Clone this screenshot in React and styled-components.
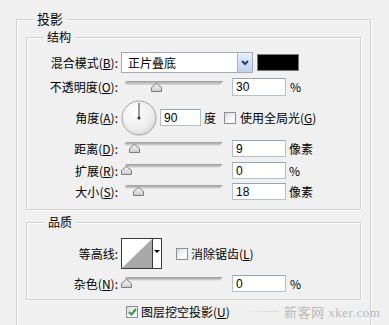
import React from 'react';
import styled, { createGlobalStyle } from 'styled-components';

const GlobalStyle = createGlobalStyle`
  html, body {
    margin: 0;
    padding: 0;
    background: #f0f0f0;
    overflow: hidden;
  }
  body {
    font-family: "Noto Sans CJK SC", "Liberation Sans", sans-serif;
    font-size: 12px;
    color: #000;
  }
`;

//Styles
const Page = styled.div`
  position: relative;
  width: 389px;
  height: 325px;
  box-sizing: border-box;
  padding: 11px 0 0 16px;
  overflow: hidden;
`;

const Group = styled.fieldset`
  box-sizing: border-box;
  width: ${p => p.$w}px;
  margin: ${p => p.$mt || 0}px 0 0 0;
  padding: ${p => p.$pt || 0}px ${p => p.$px || 0}px ${p => p.$pb || 0}px;
  border: 1px solid #d0d0d0;
  box-shadow: 1px 1px 0 #fff, inset 1px 1px 0 #fff;
  min-width: 0;
`;

const Legend = styled.legend`
  margin-left: ${p => p.$ml}px;
  padding: 0 4px;
  font-size: ${p => p.$size || 12}px;
  line-height: 16px;
  background: #f0f0f0;
`;

const Row = styled.div`
  display: flex;
  align-items: center;
  height: ${p => p.$h}px;
  margin-top: ${p => p.$mt || 0}px;
  padding-left: ${p => p.$pl || 0}px;
`;

const Label = styled.span`
  width: 91px;
  flex: none;
  text-align: right;
  margin-right: 3px;
  white-space: nowrap;
  line-height: 16px;
`;

const Text = styled.span`
  margin-left: ${p => p.$ml || 0}px;
  white-space: nowrap;
  line-height: 16px;
`;

const Select = styled.div`
  box-sizing: border-box;
  width: 132px;
  height: 21px;
  display: flex;
  align-items: center;
  justify-content: space-between;
  border: 1px solid #a5a9b0;
  background: #fff;
  padding-left: 6px;
`;

const SelectButton = styled.div`
  box-sizing: border-box;
  width: 15px;
  height: 19px;
  display: flex;
  align-items: center;
  justify-content: center;
  background: linear-gradient(#e6eefc, #bfd1f2);
  border-left: 1px solid #9fb5dc;
`;

const Swatch = styled.div`
  box-sizing: border-box;
  width: 42px;
  height: 17px;
  margin-left: 4px;
  background: #000;
  border: 1px solid #7a7a7a;
`;

const Field = styled.input`
  box-sizing: border-box;
  width: ${p => p.$w || 54}px;
  height: ${p => p.$h || 18}px;
  margin: 0 0 0 ${p => p.$ml || 0}px;
  padding: 0 0 0 3px;
  border: 1px solid #b4bfcc;
  border-top-color: #97a3b2;
  background: #fff;
  font: inherit;
  font-family: "Liberation Sans", sans-serif;
  font-size: 12px;
  color: #000;
  outline: none;
`;

const SliderBox = styled.div`
  position: relative;
  width: 98px;
  height: 16px;
  margin-left: 4px;
  flex: none;
`;

const Track = styled.div`
  position: absolute;
  left: 0;
  right: 0;
  top: ${p => p.$top}px;
  height: 4px;
  border-radius: 2px 0 0 2px;
  background: linear-gradient(#9a9a9a, #c4c4c4 60%, #dadada);
  clip-path: polygon(0 0, 100% 0, calc(100% - 3px) 100%, 0 100%);
`;

const Thumb = styled.svg`
  position: absolute;
  top: ${p => p.$top}px;
  width: 11px;
  height: 9px;
`;

const CheckBox = styled.span`
  box-sizing: border-box;
  flex: none;
  width: 12px;
  height: 12px;
  margin-left: ${p => p.$ml || 0}px;
  border: 1px solid #8e8f8f;
  background: linear-gradient(135deg, #d6d9de, #fbfbfb 70%);
  display: flex;
  align-items: center;
  justify-content: center;
`;

const Contour = styled.div`
  box-sizing: border-box;
  width: 41px;
  height: 31px;
  display: flex;
  border: 1px solid #3a3a3a;
  background: #fff;
`;

const ContourArrow = styled.div`
  flex: 1;
  display: flex;
  align-items: center;
  justify-content: center;
  border-left: 1px solid #3a3a3a;
  padding-bottom: 4px;
  &::after {
    content: '';
    border-left: 3px solid transparent;
    border-right: 3px solid transparent;
    border-top: 3px solid #000;
  }
`;

const Watermark = styled.div`
  position: absolute;
  left: 244px;
  top: 302px;
  display: flex;
  align-items: center;
  gap: 6px;
  font-family: "Liberation Serif", "Noto Sans CJK SC", serif;
  font-size: 13px;
  color: #b9b9b9;
  letter-spacing: 0.5px;
  &::before {
    content: '';
    width: 34px;
    height: 1px;
    background: linear-gradient(90deg, transparent, #d8d8d8);
  }
`;
//styles end

function Slider({ pos, top = 3 }) {
  return (
    <SliderBox>
      <Track $top={top} />
      <Thumb $top={top + 2} viewBox="0 0 11 9" style={{ left: pos - 5 }}>
        <defs>
          <linearGradient id="thumbFill" x1="0" y1="0" x2="0" y2="1">
            <stop offset="0" stopColor="#fbfbfb" />
            <stop offset="1" stopColor="#c9c9c9" />
          </linearGradient>
        </defs>
        <polygon
          points="5.5,0.5 10.5,4.5 10.5,8.5 0.5,8.5 0.5,4.5"
          fill="url(#thumbFill)"
          stroke="#7d7d7d"
        />
      </Thumb>
    </SliderBox>
  );
}

function Dial() {
  return (
    <svg width="36" height="36" viewBox="0 0 36 36" style={{ flex: 'none' }}>
      <defs>
        <radialGradient id="dialFill" cx="0.4" cy="0.35" r="0.7">
          <stop offset="0" stopColor="#ffffff" />
          <stop offset="0.7" stopColor="#ececec" />
          <stop offset="1" stopColor="#d6d6d6" />
        </radialGradient>
      </defs>
      <circle cx="18" cy="18" r="17" fill="url(#dialFill)" stroke="#a2a2a2" />
      <line x1="18" y1="18" x2="18" y2="3" stroke="#3c3c3c" strokeWidth="1" />
      <circle cx="18" cy="18" r="1.6" fill="#3c3c3c" />
    </svg>
  );
}

const sliders = [
  { label: '距离', key: 'D', value: '9', unit: '像素', pos: 9, mt: 5 },
  { label: '扩展', key: 'R', value: '0', unit: '%', pos: 1, mt: 5 },
  { label: '大小', key: 'S', value: '18', unit: '像素', pos: 13, mt: 4 }
];

const App = () => {
  return (
    <Page>
      <GlobalStyle />
      <Group $w={355} $px={9} $pb={40}>
        <Legend $ml={7} $size={13}>投影</Legend>
        <Group $w={335} $mt={2} $pt={7} $pb={9}>
          <Legend $ml={16}>结构</Legend>
          <Row $h={21}>
            <Label>
              混合模式(<u>B</u>):
            </Label>
            <Select>
              <span>正片叠底</span>
              <SelectButton>
                <svg width="8" height="6" viewBox="0 0 8 6">
                  <polyline
                    points="1,1 4,4 7,1"
                    fill="none"
                    stroke="#243c6e"
                    strokeWidth="2"
                  />
                </svg>
              </SelectButton>
            </Select>
            <Swatch />
          </Row>
          <Row $h={18} $mt={5}>
            <Label>
              不透明度(<u>O</u>):
            </Label>
            <Slider pos={31} top={2} />
            <Field $ml={9} defaultValue="30" readOnly />
            <Text $ml={4}>%</Text>
          </Row>
          <Row $h={35} $mt={4}>
            <Label>
              角度(<u>A</u>):
            </Label>
            <Dial />
            <Field $ml={3} $w={41} $h={17} defaultValue="90" readOnly />
            <Text $ml={3}>度</Text>
            <CheckBox $ml={8} />
            <Text $ml={4}>
              使用全局光(<u>G</u>)
            </Text>
          </Row>
          {sliders.map(s => (
            <Row key={s.key} $h={17} $mt={s.mt}>
              <Label>
                {s.label}(<u>{s.key}</u>):
              </Label>
              <Slider pos={s.pos} top={1} />
              <Field $ml={9} $h={17} defaultValue={s.value} readOnly />
              <Text $ml={3}>{s.unit}</Text>
            </Row>
          ))}
        </Group>
        <Group $w={335} $mt={4} $pt={8} $pb={7}>
          <Legend $ml={17}>品质</Legend>
          <Row $h={31}>
            <Label>等高线:</Label>
            <Contour>
              <svg width="30" height="29" viewBox="0 0 30 29" style={{ flex: 'none' }}>
                <polygon points="0,29 30,0 30,29" fill="#a9a9a9" />
              </svg>
              <ContourArrow />
            </Contour>
            <CheckBox $ml={14} />
            <Text $ml={3}>
              消除锯齿(<u>L</u>)
            </Text>
          </Row>
          <Row $h={17} $mt={6}>
            <Label>
              杂色(<u>N</u>):
            </Label>
            <Slider pos={1} top={1} />
            <Field $ml={9} $h={17} defaultValue="0" readOnly />
            <Text $ml={4}>%</Text>
          </Row>
        </Group>
        <Row $h={16} $mt={4} $pl={100}>
          <CheckBox>
            <svg width="9" height="8" viewBox="0 0 9 8">
              <polyline
                points="1,4 3.5,6.5 8,1"
                fill="none"
                stroke="#2f9a3a"
                strokeWidth="2"
              />
            </svg>
          </CheckBox>
          <Text $ml={3}>
            图层挖空投影(<u>U</u>)
          </Text>
        </Row>
      </Group>
      <Watermark>新客网 xker.com</Watermark>
    </Page>
  );
};

export default App;
